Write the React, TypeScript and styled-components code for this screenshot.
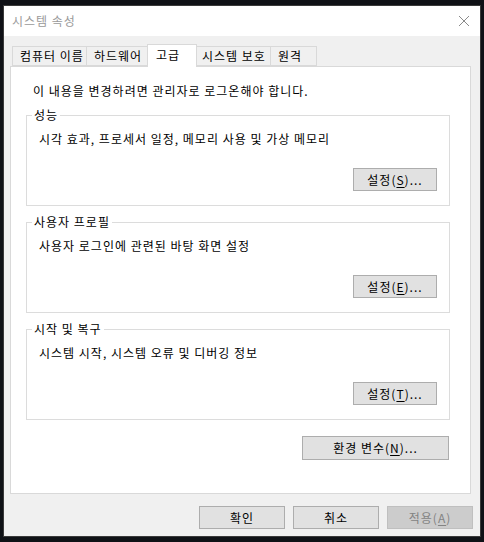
import React from 'react'
import styled, { createGlobalStyle } from 'styled-components'

const GlobalStyle = createGlobalStyle`
  html, body {
    margin: 0;
    padding: 0;
    background: #0f1116;
  }
  * {
    box-sizing: border-box;
  }
  body {
    font-family: "Noto Sans CJK KR", "Noto Sans", sans-serif;
    font-size: 12px;
    letter-spacing: 1px;
    color: #000;
  }
`

const tabs = [
  { label: '컴퓨터 이름', width: 75 },
  { label: '하드웨어', width: 62 },
  { label: '고급', width: 46 },
  { label: '시스템 보호', width: 76 },
  { label: '원격', width: 46 },
]

const groups = [
  { title: '성능', text: '시각 효과, 프로세서 일정, 메모리 사용 및 가상 메모리', key: 'S' },
  { title: '사용자 프로필', text: '사용자 로그인에 관련된 바탕 화면 설정', key: 'E' },
  { title: '시작 및 복구', text: '시스템 시작, 시스템 오류 및 디버깅 정보', key: 'T' },
]

function App() {
  return (
    <>
      <GlobalStyle />
      <Page>
        <Window>
          <TitleBar>
            <Title>시스템 속성</Title>
            <CloseIcon width="12" height="12" viewBox="0 0 12 12">
              <path d="M1 1 L11 11 M11 1 L1 11" stroke="#8a8a8a" strokeWidth="1" fill="none" />
            </CloseIcon>
          </TitleBar>

          <Body>
            <TabStrip>
              {tabs.map(tab => (
                <Tab key={tab.label} width={tab.width} active={tab.label === '고급'}>
                  {tab.label}
                </Tab>
              ))}
            </TabStrip>

            <Panel>
              <Notice>이 내용을 변경하려면 관리자로 로그온해야 합니다.</Notice>

              {groups.map(group => (
                <Group key={group.title}>
                  <Legend>{group.title}</Legend>
                  <GroupText>{group.text}</GroupText>
                  <GroupFooter>
                    <Button width={84}>
                      설정(<u>{group.key}</u>)...
                    </Button>
                  </GroupFooter>
                </Group>
              ))}

              <EnvRow>
                <Button width={147} height={24}>
                  환경 변수(<u>N</u>)...
                </Button>
              </EnvRow>
            </Panel>

            <Footer>
              <Button width={86}>확인</Button>
              <Button width={86}>취소</Button>
              <Button width={86} disabled>
                적용(<u>A</u>)
              </Button>
            </Footer>
          </Body>
        </Window>
      </Page>
    </>
  )
}

export default App

const Page = styled.div`
  width: 484px;
  height: 542px;
  padding: 5px 0 0 3px;
`

const Window = styled.div`
  width: 478px;
  height: 532px;
  border: 1px solid #3a3a3a;
  background: #f0f0f0;
  display: flex;
  flex-direction: column;
`

const TitleBar = styled.div`
  height: 30px;
  background: #fff;
  display: flex;
  align-items: center;
  justify-content: space-between;
  padding: 0 9px 0 8px;
`

const Title = styled.div`
  color: #9a9a9a;
  font-size: 12px;
  line-height: 16px;
`

const CloseIcon = styled.svg`
  display: block;
  margin-right: 1px;
`

const Body = styled.div`
  flex: 1;
  display: flex;
  flex-direction: column;
  padding: 8px 6px 0 6px;
`

const TabStrip = styled.div`
  display: flex;
  align-items: flex-end;
  height: 22px;
  padding-left: 2px;
  position: relative;
  z-index: 1;
`

const Tab = styled.div<{ active?: boolean; width: number }>`
  width: ${p => (p.active ? p.width + 4 : p.width)}px;
  height: ${p => (p.active ? '23px' : '20px')};
  margin: ${p => (p.active ? '0 -2px -1px -2px' : '0')};
  padding: ${p => (p.active ? '2px 0 0 8px' : '1px 0 0 7px')};
  background: ${p => (p.active ? '#fff' : '#f0f0f0')};
  border: 1px solid #d9d9d9;
  border-bottom: ${p => (p.active ? 'none' : '1px solid #d9d9d9')};
  border-left: ${p => (p.active ? '1px solid #d9d9d9' : 'none')};
  line-height: 16px;
  white-space: nowrap;
  position: relative;
  z-index: ${p => (p.active ? 2 : 1)};

  &:first-child {
    border-left: 1px solid #d9d9d9;
  }
`

const Panel = styled.div`
  width: 461px;
  height: 428px;
  background: #fff;
  border: 1px solid #d9d9d9;
  padding: 16px 20px 0 15px;
  display: flex;
  flex-direction: column;
`

const Notice = styled.div`
  line-height: 16px;
  padding-left: 7px;
  margin-bottom: 16px;
`

const Group = styled.div`
  position: relative;
  height: 91px;
  border: 1px solid #dcdcdc;
  padding: 15px 12px 0 12px;
  margin-bottom: 16px;
  display: flex;
  flex-direction: column;
`

const Legend = styled.span`
  position: absolute;
  top: -9px;
  left: 5px;
  padding: 0 2px;
  background: #fff;
  line-height: 16px;
`

const GroupText = styled.div`
  line-height: 16px;
`

const GroupFooter = styled.div`
  display: flex;
  justify-content: flex-end;
  margin-top: 21px;
`

const Button = styled.button<{ width: number; height?: number }>`
  width: ${p => p.width}px;
  height: ${p => p.height ?? 23}px;
  background: ${p => (p.disabled ? '#cccccc' : '#e1e1e1')};
  border: 1px solid ${p => (p.disabled ? '#bfbfbf' : '#adadad')};
  color: ${p => (p.disabled ? '#838383' : '#000')};
  font-family: "Noto Sans CJK KR", "Noto Sans", sans-serif;
  font-size: 12px;
  letter-spacing: 1px;
  line-height: 16px;
  padding: 0;
  border-radius: 0;

  u {
    text-underline-offset: 2px;
  }
`

const EnvRow = styled.div`
  display: flex;
  justify-content: flex-end;
  padding-right: 1px;
`

const Footer = styled.div`
  display: flex;
  justify-content: flex-end;
  gap: 8px;
  padding: 12px 1px 0 0;
`
